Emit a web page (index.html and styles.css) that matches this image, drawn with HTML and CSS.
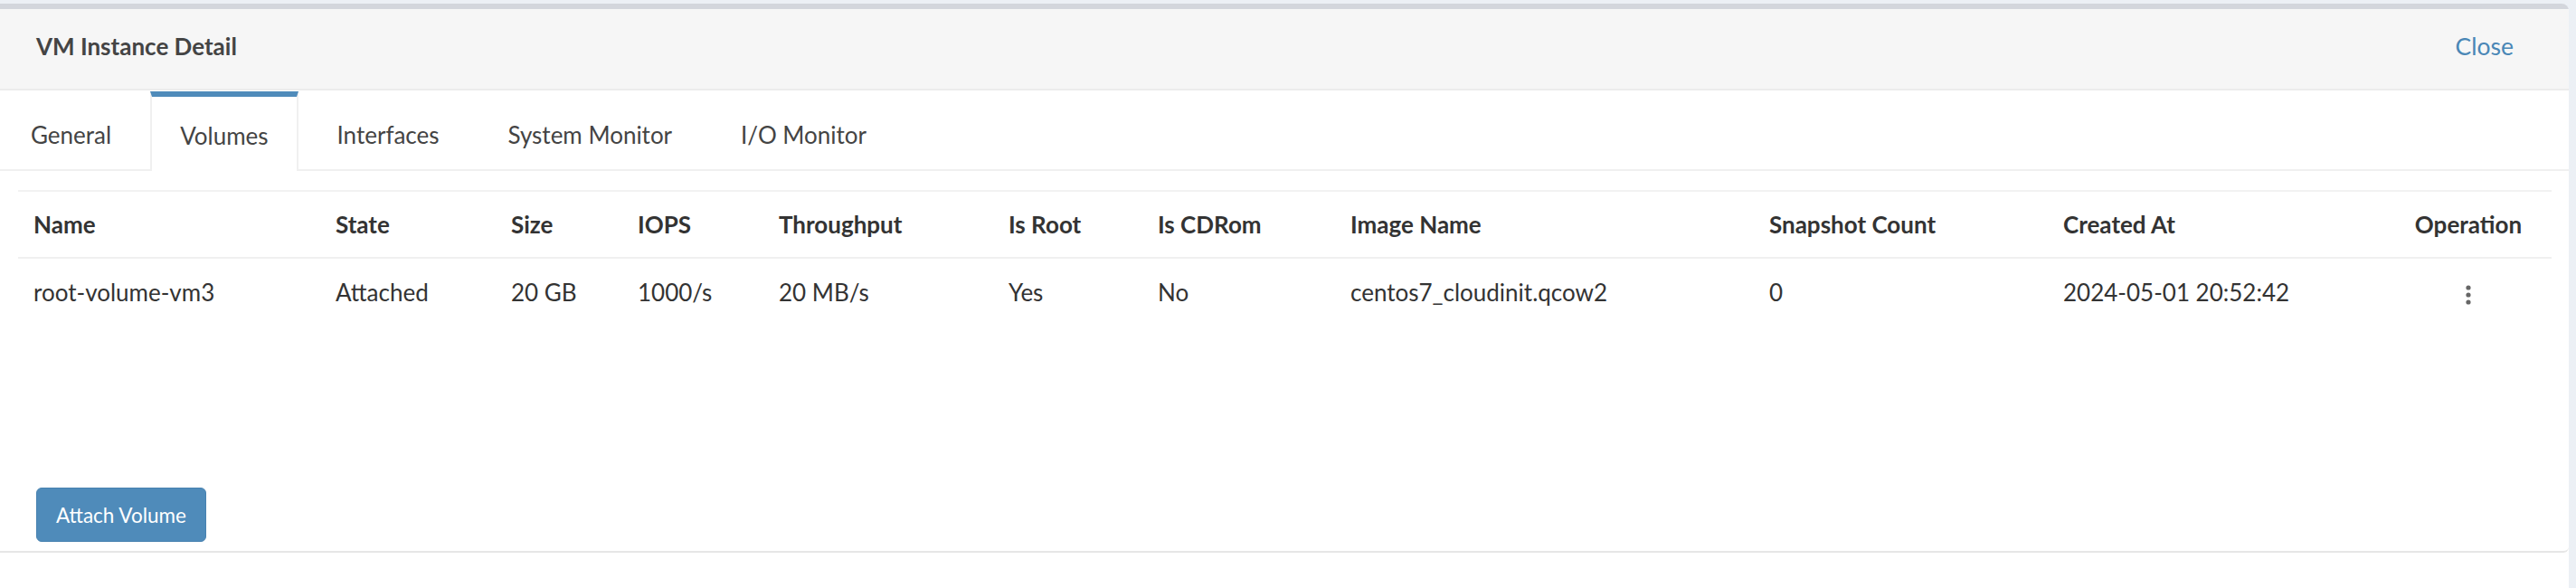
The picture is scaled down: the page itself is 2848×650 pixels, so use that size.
FILE: index.html
```html
<!DOCTYPE html>
<html lang="en">
<head>
<meta charset="utf-8">
<title>VM Instance Detail</title>
<link rel="stylesheet" href="styles.css">
</head>
<body>
<div class="screen">
  <div class="modal">
    <div class="box">
      <div class="box-header">
        <h3 class="box-title">VM Instance Detail</h3>
        <a class="close-link" href="#">Close</a>
      </div>
      <ul class="nav-tabs">
        <li class="tab">General</li>
        <li class="tab active">Volumes</li>
        <li class="tab">Interfaces</li>
        <li class="tab">System Monitor</li>
        <li class="tab">I/O Monitor</li>
      </ul>
      <div class="tab-content">
        <table class="vol-table">
          <colgroup>
            <col class="c-name"><col class="c-state"><col class="c-size"><col class="c-iops"><col class="c-tp"><col class="c-root"><col class="c-cd"><col class="c-img"><col class="c-snap"><col class="c-created"><col class="c-op">
          </colgroup>
          <thead>
            <tr>
              <th>Name</th><th>State</th><th>Size</th><th>IOPS</th><th>Throughput</th><th>Is Root</th><th>Is CDRom</th><th>Image Name</th><th>Snapshot Count</th><th>Created At</th><th class="center">Operation</th>
            </tr>
          </thead>
          <tbody>
            <tr>
              <td>root-volume-vm3</td><td>Attached</td><td>20 GB</td><td>1000/s</td><td>20 MB/s</td><td>Yes</td><td>No</td><td>centos7_cloudinit.qcow2</td><td>0</td><td>2024-05-01 20:52:42</td>
              <td class="center"><svg class="kebab" width="6" height="24" viewBox="0 0 6 24"><circle cx="3" cy="4" r="2.6"/><circle cx="3" cy="12" r="2.6"/><circle cx="3" cy="20" r="2.6"/></svg></td>
            </tr>
          </tbody>
        </table>
      </div>
      <div class="box-footer">
        <button class="btn-primary" type="button">Attach Volume</button>
      </div>
    </div>
  </div>
</div>
</body>
</html>
```

FILE: styles.css
```css
html, body {
  margin: 0;
  padding: 0;
}
body {
  background: #ecf0f5;
  font-family: Lato, "Liberation Sans", sans-serif;
  color: #333;
  width: 2848px;
  height: 650px;
  overflow: hidden;
}
.screen {
  padding: 4px 8px 0 0;
}
.modal {
  background: #fff;
  border-top: 6px solid #d3d6dc;
  border-radius: 0 8px 8px 0;
  height: 660px;
}
.box {
  background: #fff;
  border-bottom: 2px solid #e6e6e6;
  border-radius: 0 0 6px 0;
}
.box-header {
  background: #f6f6f6;
  border-bottom: 2px solid #ececec;
  display: flex;
  align-items: center;
  justify-content: space-between;
  padding: 0 61px 6px 40px;
  box-sizing: border-box;
  height: 90px;
}
.box-title {
  margin: 0;
  font-size: 26px;
  font-weight: 700;
  color: #444;
}
.close-link {
  font-size: 26.5px;
  color: #4a87b6;
  text-decoration: none;
}
.nav-tabs {
  list-style: none;
  margin: 0;
  padding: 0 0 0 1px;
  display: flex;
  height: 89px;
  box-sizing: border-box;
  border-bottom: 2px solid #f0f0f0;
}
.tab {
  display: flex;
  align-items: center;
  padding: 4px 31px 0;
  margin-right: 10px;
  margin-top: 1px;
  border-top: 6px solid transparent;
  border-left: 2px solid transparent;
  border-right: 2px solid transparent;
  font-size: 26px;
  color: #444;
}
.tab.active {
  border-top-color: #4f8bba;
  border-left-color: #f0f0f0;
  border-right-color: #f0f0f0;
  background: #fff;
  margin-bottom: -2px;
}
.tab-content {
  padding: 21px 27px 0 20px;
  height: 350px;
  box-sizing: border-box;
}
.vol-table {
  width: 2801px;
  table-layout: fixed;
  border-collapse: collapse;
  border-top: 2px solid #f2f2f2;
  font-size: 26px;
}
.c-name { width: 334px; }
.c-state { width: 194px; }
.c-size { width: 140px; }
.c-iops { width: 156px; }
.c-tp { width: 254px; }
.c-root { width: 165px; }
.c-cd { width: 213px; }
.c-img { width: 463px; }
.c-snap { width: 325px; }
.c-created { width: 373px; }
.c-op { width: 184px; }
.vol-table th {
  height: 72px;
  padding: 0 17px;
  text-align: left;
  font-weight: 700;
  color: #333;
  border-bottom: 2px solid #f0f0f0;
  white-space: nowrap;
}
.vol-table td {
  height: 74px;
  padding: 0 17px;
  color: #333;
  white-space: nowrap;
}
.vol-table .center {
  text-align: center;
}
.kebab {
  fill: #666;
  vertical-align: middle;
}
.box-footer {
  padding: 0 40px 10px;
}
.btn-primary {
  height: 60px;
  padding: 0 21px;
  background: #4f8bba;
  border: 1px solid #4882b0;
  border-radius: 6px;
  color: #fff;
  font-family: Lato, "Liberation Sans", sans-serif;
  font-size: 22.5px;
}
```
